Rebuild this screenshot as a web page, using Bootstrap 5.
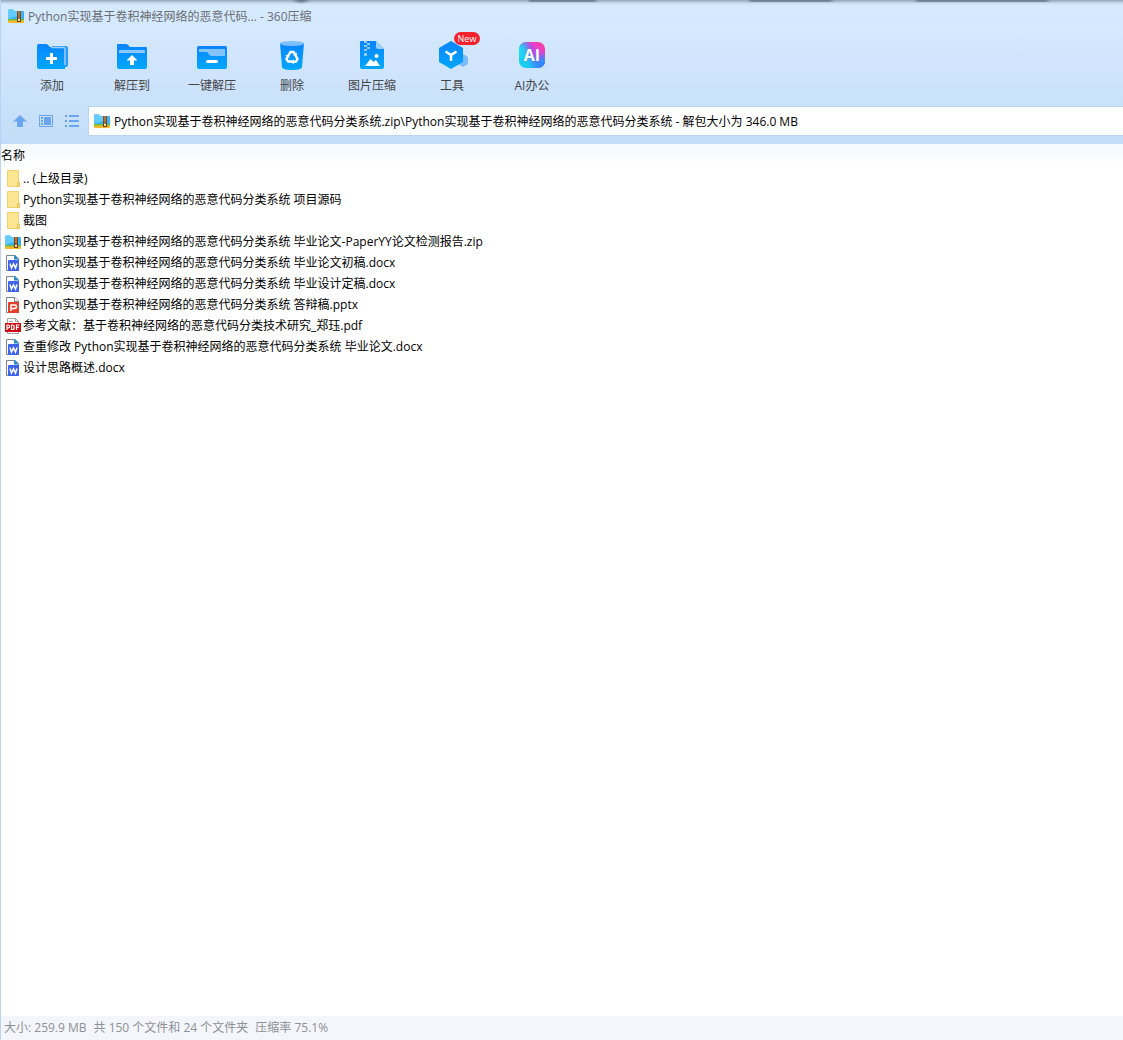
<!DOCTYPE html>
<html lang="zh-CN">
<head>
<meta charset="utf-8">
<meta name="viewport" content="width=device-width, initial-scale=1">
<title>360压缩</title>
<link href="https://cdn.jsdelivr.net/npm/bootstrap@5.3.0/dist/css/bootstrap.min.css" rel="stylesheet">
<style>
body{font-family:"Open Sans","Noto Sans CJK SC",sans-serif;font-size:12px;line-height:21px;color:#000;background:#fff;border-left:1px solid #b9d2f6}
.app-head{background:linear-gradient(#d7ebff 0,#d0e5fd 45%,#c3ddf8 100%);position:relative}
.top-shade{position:absolute;top:0;left:0;right:0;height:6px;background:
 radial-gradient(ellipse 10px 4px at 300px 0,#5c6c7e,transparent),
 linear-gradient(90deg,transparent 526px,rgba(70,85,105,.5) 530px,rgba(70,85,105,.5) 592px,transparent 598px,transparent 746px,rgba(70,85,105,.5) 751px,rgba(70,85,105,.5) 828px,transparent 834px,transparent 912px,rgba(70,85,105,.5) 918px,rgba(70,85,105,.5) 1044px,transparent 1050px) 0 0/100% 2px no-repeat,
 linear-gradient(#92a4b8 0,#b6c8dc 2px,rgba(200,220,240,.4) 4px,transparent)}
.title-row{height:32px;padding-left:7px;gap:4px;color:#6a6d72}
.tool-row{padding-left:11px;height:74px}
.tool{width:80px;padding:6px 0 0;border:0;background:none;color:#444;line-height:20px;position:relative;display:flex;flex-direction:column;align-items:center;gap:4px}
.tool svg{overflow:visible}
.new-tag{position:absolute;left:42px;top:0;width:26px;height:13px;border-radius:7px;background:#f5222d;color:#fff;font-size:9px;line-height:13px}
.path-row{height:38px;padding:0 0 8px 10px}
.nav-btn{width:26px;padding:0 0 0 1px;border:0;background:none;display:flex}
.path-box{margin-left:-1px;background:#fff;border:1px solid #b9d5f0;border-right:0;height:30px;padding-left:5px;gap:4px}
.path-box input{border:0;outline:0;padding:0;background:none;color:#000;min-width:0}
.file-list{border-collapse:collapse}
.file-list th{font-weight:400;padding:0;height:24px;line-height:24px;background:linear-gradient(#f3f9ff,#fff)}
.file-list td{padding:0 0 0 4px;height:21px}
.file-list a{display:flex;align-items:center;gap:2px;height:21px;color:#000;text-decoration:none;white-space:nowrap}
.status-bar{height:24px;line-height:23px;background:#f4f6fb;color:#8d9096;margin-left:-1px;padding-left:4px;gap:7px}
</style>
<script src="https://cdn.jsdelivr.net/npm/bootstrap@5.3.0/dist/js/bootstrap.bundle.min.js"></script>
</head>
<body class="d-flex flex-column min-vh-100">
<svg width="0" height="0" class="position-absolute" aria-hidden="true">
<defs>
<linearGradient id="blue" x2="0" y2="1"><stop stop-color="#0a84ff"/><stop offset="1" stop-color="#00a8ff"/></linearGradient>
<linearGradient id="ai" x1="0" y1="1" x2="1" y2="0"><stop stop-color="#10d8f0"/><stop offset=".3" stop-color="#22c3f2"/><stop offset=".55" stop-color="#9a55f0"/><stop offset=".75" stop-color="#ee3fc8"/><stop offset="1" stop-color="#f83f86"/></linearGradient>
<radialGradient id="aib" cx="1" cy="1" r=".65"><stop stop-color="#2f7dff"/><stop offset=".4" stop-color="#2f8dff"/><stop offset="1" stop-color="#2f8dff" stop-opacity="0"/></radialGradient>
<radialGradient id="aic" cx="0" cy=".3" r=".5"><stop stop-color="#12e6ee"/><stop offset="1" stop-color="#12e6ee" stop-opacity="0"/></radialGradient>
<symbol id="zip" viewBox="0 0 16 16"><path d="M0 2.500Q0 1.500 1 1.500h4L6.500 3H15q1 0 1 1v8H0z" fill="#35b4f5"/><path d="M0 2.500Q0 1.500 1 1.500h4L6.500 3H9v5L0 11z" fill="#63ccff"/><path d="M0 11.500h16V14q0 1-1 1H1q-1 0-1-1z" fill="#f6b92c"/><path d="M0 11h16v1.500H0z" fill="#72bc45"/><path d="M9 3h4v9H9z" fill="#87481d"/><path d="M10.500 3h1v8h-1z" fill="#d4a15a"/><path d="M9 9.500h4V14H9z" fill="#6f3b16"/><path d="M10 10.500h2V13h-2z" fill="#ffe18a"/></symbol>
<symbol id="dir" viewBox="0 0 16 18"><path d="M2.500 .5h11v16h-11z" fill="#fde591" stroke="#efd172"/><path d="M12.500 12.500h2v4h-2z" fill="#fbdf83" stroke="#e6c45b"/></symbol>
<symbol id="page" viewBox="0 0 16 18"><path d="M1.500 1.500h8.500l3.500 3.500v11.500h-12z" fill="#fff" stroke="#7d8592"/></symbol>
<symbol id="doc" viewBox="0 0 16 18"><use href="#page"/><path d="M9 1h1l4 4.500H9z" fill="#2a8bc8"/><rect x="3" y="6" width="11" height="11" rx="1" fill="#3e63ee"/><path d="M5 9.500 6.500 14 8.500 10l2 4 1.500-4.500" fill="none" stroke="#fff" stroke-width="1.500"/></symbol>
<symbol id="ppt" viewBox="0 0 16 18"><use href="#page"/><path d="M9.500 1.500v4h4" fill="#fff" stroke="#7d8592"/><rect x="3" y="6" width="11" height="11" rx="1" fill="#e2432a"/><path d="M6 15V9h3.500q2 0 2 1.700t-2 1.800H6" fill="none" stroke="#fff" stroke-width="1.500"/></symbol>
<symbol id="pdf" viewBox="0 0 16 18"><path d="M2.500 1.500h8l3 3v12h-11z" fill="#fff" stroke="#a4a4a4"/><path d="M10.500 1.500v3h3M4 4.500h4" fill="none" stroke="#a4a4a4"/><path d="M0 6h16v9H0z" fill="#cf0a12"/><path d="M2 13V8h1.300q1.200 0 1.200 1.400t-1.200 1.400H2M6.500 8v4.500h1q1.800 0 1.800-2.250T7.500 8zM11.500 13V8H14.500M11.500 10.400h2.500" fill="none" stroke="#fff" stroke-width="1.200"/></symbol>
</defs></svg>

<header class="app-head">
<div class="top-shade"></div>
<div class="title-row d-flex align-items-center"><svg width="16" height="16"><use href="#zip"/></svg><span>Python实现基于卷积神经网络的恶意代码... - 360压缩</span></div>
<nav class="tool-row d-flex" aria-label="工具栏">
<button class="tool" type="button"><svg width="32" height="34" viewBox="0 0 32 34"><path d="M16 8h14q2 0 2 2v17q0 2-2 2H16z" fill="#2f98ff"/><path d="M1 8q0-2 2-2h7q1 0 2 1l2 2h13q2 0 2 2v20H3q-2 0-2-2z" fill="url(#blue)"/><path d="M15 9.500h12.500q1.500 0 1.500 1.500v16" fill="none" stroke="#9bceff" stroke-width="1.500"/><path d="M15.500 15v11M10 20.500h11" stroke="#fff" stroke-width="3"/></svg>添加</button>
<button class="tool" type="button"><svg width="32" height="34" viewBox="0 0 32 34"><path d="M1 7q0-1 1-1h8q1 0 2 1l2 2h16q1 0 1 1v19q0 2-2 2H3q-2 0-2-2z" fill="url(#blue)"/><path d="M3 15v-2q0-1 1-1h24q1 0 1 1v2z" fill="#8bc7ff"/><path d="m16 17 5.500 5.500H18v4.500h-4v-4.500h-3.500z" fill="#fff"/></svg>解压到</button>
<button class="tool" type="button"><svg width="32" height="34" viewBox="0 0 32 34"><rect x="1" y="8" width="30" height="23" rx="2" fill="url(#blue)"/><path d="M3 11h26v7H16q-2 0-3-1.500L11 14H3z" fill="#83c3ff"/><path d="M11.500 23.500h9" stroke="#fff" stroke-width="3" stroke-linecap="round"/></svg>一键解压</button>
<button class="tool" type="button"><svg width="32" height="34" viewBox="0 0 32 34"><path d="M4 5h24l-2 24q0 3-10 3T6 29z" fill="url(#blue)"/><ellipse cx="16" cy="5.500" rx="12" ry="2.500" fill="#7fbfff"/><g id="rec"><path d="m12.500 17.500 2-3.500h3l1.500 2" fill="none" stroke="#fff" stroke-width="2.400"/><path d="m21 14.500-.5 4-4-1.500z" fill="#fff"/></g><use href="#rec" transform="rotate(120 16 19.500)"/><use href="#rec" transform="rotate(240 16 19.500)"/></svg>删除</button>
<button class="tool" type="button"><svg width="32" height="34" viewBox="0 0 32 34"><path d="M4 4q0-1 1-1h15l8 8v18q0 2-2 2H6q-2 0-2-2z" fill="url(#blue)"/><path d="M20 3v6q0 2 2 2h6z" fill="#9bd0ff"/><path d="M8 3h3v2H8zM11 5h3v2h-3zM8 7h3v2H8zM11 9h3v2h-3zM8 11h3v2H8zM8 15h3v3H8z" fill="#8fcbff"/><path d="m9 28 5.500-7 3 3 2.500-2 4 6z" fill="#fff"/><circle cx="20.500" cy="18" r="2" fill="#fff"/></svg>图片压缩</button>
<button class="tool" type="button"><svg width="32" height="34" viewBox="0 0 32 34"><path d="m27 16 5 3v7l-5 3-5-3v-7z" fill="#7dbdfc"/><path d="m15 3 12 7v14l-12 7-12-7V10z" fill="url(#blue)"/><path d="m9.500 13.500 5.500 3.500 5.500-3.500M15 17v6" stroke="#fff" stroke-width="2.500" fill="none"/></svg>工具<span class="new-tag">New</span></button>
<button class="tool" type="button"><svg width="32" height="34" viewBox="0 0 32 34"><rect x="3" y="4" width="26" height="26" rx="7" fill="url(#ai)"/><rect x="3" y="4" width="26" height="26" rx="7" fill="url(#aib)"/><rect x="3" y="4" width="26" height="26" rx="7" fill="url(#aic)"/><text x="16" y="23" text-anchor="middle" font-size="16" font-weight="700" fill="#fff">AI</text></svg>AI办公</button>
</nav>
<div class="path-row d-flex align-items-center">
<button class="nav-btn" type="button" aria-label="向上"><svg width="16" height="16"><path d="m8 2 7 6.500h-4V14H5V8.500H1z" fill="#6aa5f2"/></svg></button>
<button class="nav-btn" type="button" aria-label="预览"><svg width="16" height="16"><path d="M1.500 2.500h13v11h-13z" fill="none" stroke="#6aa5f2"/><path d="M6 4h7v8H6zM3 4h2v2H3zM3 7h2v2H3zM3 10h2v2H3z" fill="#6aa5f2"/></svg></button>
<button class="nav-btn" type="button" aria-label="列表"><svg width="16" height="16"><path d="M1 2h2v2H1zM5 2h10v2H5zM1 7h2v2H1zM5 7h10v2H5zM1 12h2v2H1zM5 12h10v2H5z" fill="#6aa5f2"/></svg></button>
<div class="path-box d-flex align-items-center flex-grow-1"><svg width="16" height="16"><use href="#zip"/></svg><input class="flex-grow-1" type="text" aria-label="路径" value="Python实现基于卷积神经网络的恶意代码分类系统.zip\Python实现基于卷积神经网络的恶意代码分类系统 - 解包大小为 346.0 MB"></div>
</div>
</header>

<main class="flex-grow-1">
<table class="file-list w-100">
<thead><tr><th scope="col">名称</th></tr></thead>
<tbody>
<tr><td><a href="#"><svg width="16" height="18"><use href="#dir"/></svg>.. (上级目录)</a></td></tr>
<tr><td><a href="#"><svg width="16" height="18"><use href="#dir"/></svg>Python实现基于卷积神经网络的恶意代码分类系统 项目源码</a></td></tr>
<tr><td><a href="#"><svg width="16" height="18"><use href="#dir"/></svg>截图</a></td></tr>
<tr><td><a href="#"><svg width="16" height="16"><use href="#zip"/></svg>Python实现基于卷积神经网络的恶意代码分类系统 毕业论文-PaperYY论文检测报告.zip</a></td></tr>
<tr><td><a href="#"><svg width="16" height="18"><use href="#doc"/></svg>Python实现基于卷积神经网络的恶意代码分类系统 毕业论文初稿.docx</a></td></tr>
<tr><td><a href="#"><svg width="16" height="18"><use href="#doc"/></svg>Python实现基于卷积神经网络的恶意代码分类系统 毕业设计定稿.docx</a></td></tr>
<tr><td><a href="#"><svg width="16" height="18"><use href="#ppt"/></svg>Python实现基于卷积神经网络的恶意代码分类系统 答辩稿.pptx</a></td></tr>
<tr><td><a href="#"><svg width="16" height="18"><use href="#pdf"/></svg>参考文献：基于卷积神经网络的恶意代码分类技术研究_郑珏.pdf</a></td></tr>
<tr><td><a href="#"><svg width="16" height="18"><use href="#doc"/></svg>查重修改 Python实现基于卷积神经网络的恶意代码分类系统 毕业论文.docx</a></td></tr>
<tr><td><a href="#"><svg width="16" height="18"><use href="#doc"/></svg>设计思路概述.docx</a></td></tr>
</tbody>
</table>
</main>
<footer class="status-bar d-flex"><span>大小: 259.9 MB</span> <span>共 150 个文件和 24 个文件夹</span> <span>压缩率 75.1%</span></footer>
</body>
</html>
